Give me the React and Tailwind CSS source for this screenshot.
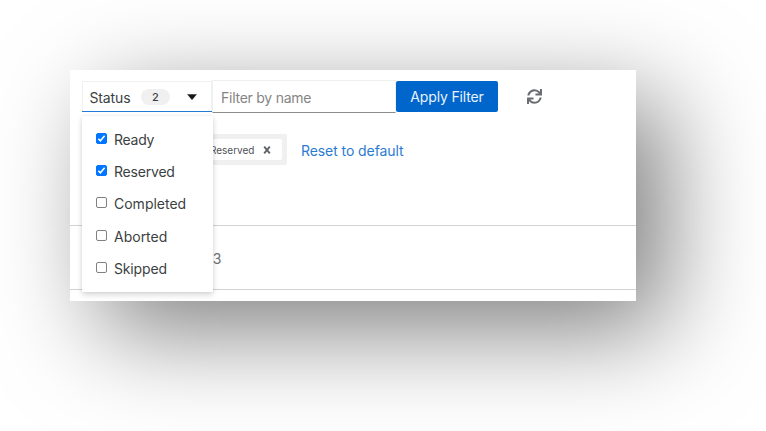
import React from "react";

const statuses = [
  { label: "Ready", checked: true, tracking: "tracking-[-0.25px]" },
  { label: "Reserved", checked: true, tracking: "tracking-[-0.2px]" },
  { label: "Completed", checked: false, tracking: "tracking-[0px]" },
  { label: "Aborted", checked: false, tracking: "tracking-[0px]" },
  { label: "Skipped", checked: false, tracking: "tracking-[-0.15px]" },
];

function Checkbox({ checked }) {
  return (
    <svg className="mt-[-2px] h-[11px] w-[11px] shrink-0" viewBox="0 0 11 11" fill="none">
      <rect
        x="0.5"
        y="0.5"
        width="10"
        height="10"
        rx="1.5"
        fill={checked ? "#0075ff" : "#ffffff"}
        stroke={checked ? "#0075ff" : "#808080"}
      />
      {checked && <path d="M2.3 5.7 4.4 7.8 8.6 2.8" stroke="#ffffff" strokeWidth="1.6" />}
    </svg>
  );
}

function RefreshIcon() {
  return (
    <svg className="mt-[9px] ml-[28.5px] h-[15px] w-[15px]" viewBox="0 0 512 512" fill="#6a6e73">
      <path d="M440.65 12.57l4 82.77A247.16 247.16 0 0 0 255.83 8C134.73 8 33.91 94.92 12.29 209.82A12 12 0 0 0 24.09 224h49.05a12 12 0 0 0 11.67-9.26 175.91 175.91 0 0 1 317-56.94l-101.46-4.86a12 12 0 0 0-12.57 12v47.410a12 12 0 0 0 12 12H500a12 12 0 0 0 12-12V12a12 12 0 0 0-12-12h-47.370a12 12 0 0 0-11.980 12.570zM255.830 432a175.610 175.610 0 0 1-146-77.800l101.800 4.870a12 12 0 0 0 12.570-12v-47.400a12 12 0 0 0-12-12H12a12 12 0 0 0-12 12V500a12 12 0 0 0 12 12h47.350a12 12 0 0 0 12-12.600l-4.150-82.570A247.170 247.170 0 0 0 255.830 504c121.110 0 221.930-86.920 243.550-201.820a12 12 0 0 0-11.800-14.180h-49.050a12 12 0 0 0-11.670 9.260A175.860 175.860 0 0 1 255.830 432z" />
    </svg>
  );
}

function StatusMenu() {
  return (
    <ul className="absolute top-[35px] left-0 z-10 h-[176px] w-[130.5px] bg-white pt-[7px] shadow-[0_3px_6px_rgba(3,3,3,0.15),0_0_3px_rgba(3,3,3,0.08)]">
      {statuses.map((s) => (
        <li key={s.label} className="flex h-[32.4px] items-center gap-[7px] pl-3.5 text-[#3c3f42]">
          <Checkbox checked={s.checked} />
          <span className={`mt-px ${s.tracking}`}>{s.label}</span>
        </li>
      ))}
    </ul>
  );
}

export default function App() {
  return (
    <main className="h-[431px] w-[766px] overflow-hidden bg-white p-[70px] font-['Inter',sans-serif] text-[14px] leading-5 text-[#151515]">
      <section className="h-[231px] w-[566px] bg-white shadow-[30px_30px_100px_rgba(0,0,0,0.5)]">
        <div className="flex h-[54px] items-start pt-[10px] pl-3">
          <div className="relative mt-px flex h-[31px] w-[130px] flex-col">
            <button className="flex h-[30px] w-full items-center border-x border-t border-[#f0f0f0] pl-1.5 text-[#3c3f42]">
              <span className="mt-0.5 w-[42px] tracking-[-0.1px]">Status</span>
              <span className="ml-[10px] flex h-4 w-[29px] items-center justify-center rounded-full bg-[#f0f0f0] text-[11px] font-medium">2</span>
              <svg className="ml-[17px] h-[6px] w-[10px]" viewBox="0 0 10 6">
                <path d="M.5.500h9L5 5.700z" fill="#151515" stroke="#151515" strokeWidth=".4" />
              </svg>
            </button>
            <div className="h-px w-full bg-[#1f7ad8]" />
            <StatusMenu />
          </div>
          <input
            className="h-[33px] w-[184px] border border-[#f0f0f0] border-b-[#8a8d90] bg-white px-2 pt-px tracking-[-0.25px] outline-none placeholder:text-[#858585]"
            placeholder="Filter by name"
            readOnly
          />
          <button className="mt-px flex h-[31px] w-[102px] items-center justify-center rounded-[2px] bg-[#0066cc] pt-px tracking-[-0.15px] whitespace-nowrap text-[#eaf3fc]">
            Apply Filter
          </button>
          <RefreshIcon />
        </div>

        <div className="flex h-[101px] items-start pt-[10px] pl-3">
          <div className="flex h-[31px] w-[204.5px] items-center justify-end rounded-[2px] bg-[#f0f0f0] pr-[5px]">
            <div className="flex h-[21px] w-[90px] items-center justify-end rounded-[2px] bg-white pr-[11px] text-[10px] text-[#4f5255]">
              <span>Reserved</span>
              <svg className="ml-2 h-2 w-2" viewBox="0 0 8 8">
                <path d="M1.200.700 6.800 7.300M6.800.700 1.200 7.300" stroke="#5f6368" strokeWidth="1.900" />
              </svg>
            </div>
          </div>
          <a className="mt-[7px] ml-[14.5px] tracking-[-0.08px] whitespace-nowrap text-[#2b7bd3]">Reset to default</a>
        </div>

        <div className="flex h-[65px] items-center border-y border-[#d2d2d2] pt-0.5 pl-[138px] text-[#6a6e73]">
          <span className="tracking-[-0.4px]">/3</span>
        </div>
      </section>
    </main>
  );
}
